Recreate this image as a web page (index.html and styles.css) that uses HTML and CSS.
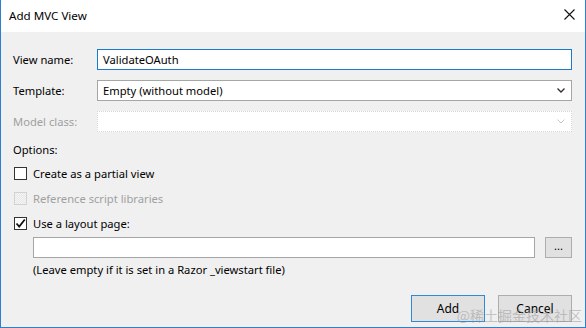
FILE: index.html
```html
<!DOCTYPE html>
<html>
<head>
<meta charset="utf-8">
<link rel="stylesheet" href="styles.css">
</head>
<body>
<div class="dialog">
  <div class="titlebar">
    <span class="title">Add MVC View</span>
    <svg class="close" width="11" height="11" viewBox="0 0 11 11"><path d="M0.5 0.5L10.5 10.5M10.5 0.5L0.5 10.5" stroke="#111" stroke-width="1.1" fill="none"/></svg>
  </div>
  <div class="content">
    <div class="form-row">
      <span class="lbl">View name:</span>
      <div class="field focus">ValidateOAuth</div>
    </div>
    <div class="form-row">
      <span class="lbl">Template:</span>
      <div class="field select">Empty (without model)<svg class="chev" width="8" height="5" viewBox="0 0 8 5"><path d="M0.5 0.5L4 4L7.5 0.5" stroke="#3a2a30" stroke-width="1.3" fill="none"/></svg></div>
    </div>
    <div class="form-row">
      <span class="lbl dis">Model class:</span>
      <div class="field select disabled"><svg class="chev" width="8" height="5" viewBox="0 0 8 5"><path d="M0.5 0.5L4 4L7.5 0.5" stroke="#c8c8c8" stroke-width="1" fill="none"/></svg></div>
    </div>
    <div class="options">Options:</div>
    <div class="check-row"><span class="cb"></span><span>Create as a partial view</span></div>
    <div class="check-row dis"><span class="cb disabled"></span><span>Reference script libraries</span></div>
    <div class="check-row"><span class="cb"><svg width="11" height="11" viewBox="0 0 11 11"><path d="M1.5 5.5L4.2 8.5L9.8 1.5" stroke="#111" stroke-width="1.8" fill="none"/></svg></span><span>Use a layout page:</span></div>
    <div class="layout-row">
      <div class="field grow"></div>
      <div class="browse">...</div>
    </div>
    <div class="hint">(Leave empty if it is set in a Razor _viewstart file)</div>
    <div class="buttons">
      <div class="btn default">Add</div>
      <div class="btn">Cancel</div>
    </div>
  </div>
  <div class="watermark">@稀土掘金技术社区</div>
</div>
</body>
</html>
```
FILE: styles.css
```css
html, body {
  margin: 0;
  padding: 0;
}
body {
  width: 586px;
  height: 328px;
  overflow: hidden;
  font-family: "Noto Sans", "Open Sans", sans-serif;
  font-size: 11.2px;
  color: #000;
}
.dialog {
  position: relative;
  box-sizing: border-box;
  width: 586px;
  height: 328px;
  border: 1px solid #2f7fd0;
  border-top: none;
  background: #f0f0f0;
  display: flex;
  flex-direction: column;
}
.titlebar {
  height: 31px;
  flex: none;
  background: #fff;
  display: flex;
  align-items: center;
  justify-content: space-between;
  padding: 0 10px 1px 8px;
}
.title {
  font-size: 11.6px;
  line-height: 16px;
}
.close {
  margin-top: -2px;
}
.content {
  padding: 17px 13px 0 12px;
  display: flex;
  flex-direction: column;
}
.form-row {
  display: flex;
  align-items: center;
  height: 21px;
  margin-bottom: 10px;
}
.lbl {
  width: 84px;
  flex: none;
}
.dis {
  color: #a0a0a0;
}
.field {
  flex: 1;
  box-sizing: border-box;
  height: 21px;
  background: #fff;
  border: 1px solid #a6a6a6;
  padding: 0 5px;
  line-height: 19px;
  display: flex;
  align-items: center;
}
.field.focus {
  border-color: #1a7ad0;
}
.select {
  justify-content: space-between;
  padding: 0 6px 0 5px;
}
.chev {
  margin-left: auto;
}
.select.disabled {
  border: 1px dotted #d6d6d6;
}
.options {
  line-height: 16px;
}
.options + .check-row {
  margin-top: 3px;
}
.check-row {
  display: flex;
  align-items: center;
  height: 25px;
}
.cb {
  box-sizing: border-box;
  width: 13px;
  height: 13px;
  border: 1px solid #333;
  background: #fff;
  margin: 0 6px 0 1px;
  display: flex;
  align-items: center;
  justify-content: center;
}
.cb.disabled {
  border-color: #d2d2d2;
  background: repeating-conic-gradient(#e6e6e6 0 25%, #f6f6f6 0 50%) 0 0 / 2px 2px;
}
.layout-row {
  display: flex;
  margin: 1px 0 0 20px;
  height: 21px;
}
.browse {
  box-sizing: border-box;
  width: 27px;
  height: 21px;
  margin-left: 10px;
  background: #e1e1e1;
  border: 1px solid #adadad;
  text-align: center;
  line-height: 16px;
}
.hint {
  margin: 4px 0 0 20px;
  line-height: 16px;
}
.buttons {
  display: flex;
  justify-content: flex-end;
  gap: 13px;
  margin-top: 17px;
}
.btn {
  box-sizing: border-box;
  width: 74px;
  height: 27px;
  background: #e1e1e1;
  border: 1px solid #adadad;
  display: flex;
  align-items: center;
  justify-content: center;
  font-size: 12px;
}
.btn.default {
  border-color: #2f8ad8;
}
.watermark {
  position: absolute;
  right: 3px;
  bottom: 3px;
  font-family: "Noto Sans CJK SC", sans-serif;
  font-size: 14px;
  color: rgba(150, 150, 150, 0.5);
  line-height: 18px;
}
```
